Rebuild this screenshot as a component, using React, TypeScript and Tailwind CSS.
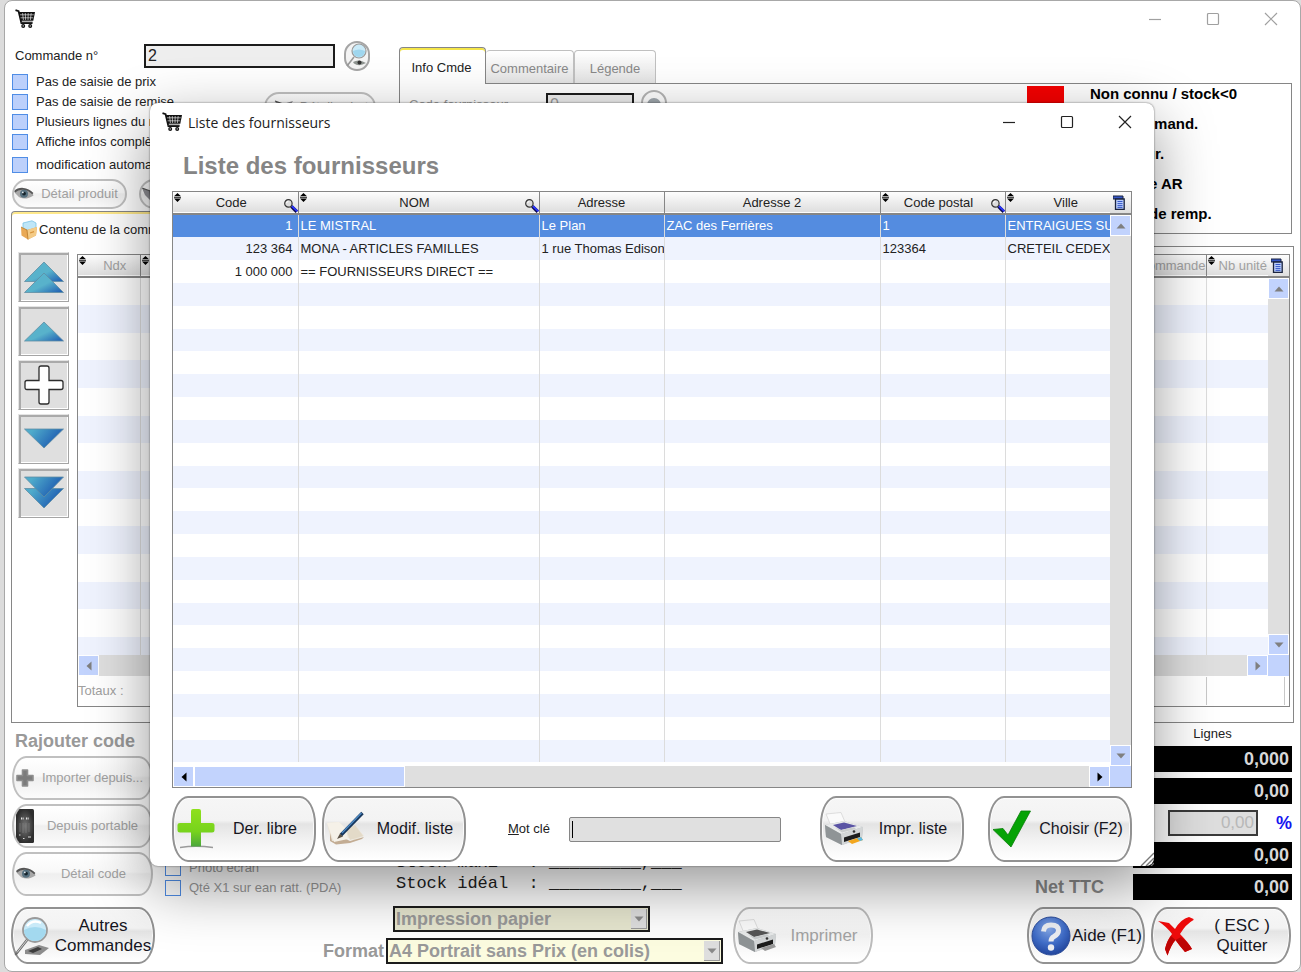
import React from "react";

/* ---------- icons ---------- */

function CartIcon() {
  return (
    <svg width="20" height="20" viewBox="0 0 20 20" aria-hidden="true">
      <path d="M0.5 1.2 L3.6 2.2 L6.4 14 H17.5" fill="none" stroke="#111" strokeWidth="1.8" />
      <path d="M4 3 H20 L18.3 11.8 H5.8 Z" fill="#111" />
      <path d="M5 5.8 H18.8 M5.6 8.8 H18.2 M7.6 4 L8.4 11 M10.3 4 L10.6 11 M13.2 4 L13 11 M16.2 4 L15.4 11" stroke="#fff" strokeWidth="0.6" />
      <path d="M6.2 13 H17.6" stroke="#555" strokeWidth="0.9" />
      <circle cx="8.2" cy="16.9" r="2" fill="#111" />
      <circle cx="15.2" cy="16.9" r="2" fill="#111" />
      <circle cx="8.2" cy="16.9" r="0.6" fill="#fff" />
      <circle cx="15.2" cy="16.9" r="0.6" fill="#fff" />
    </svg>
  );
}

function SortIcon() {
  return (
    <svg className="absolute left-px top-px" width="7" height="9" viewBox="0 0 7 9" aria-hidden="true">
      <path d="M3.5 0 L7 3.2 H0 Z M0 5.6 H7 L3.5 9 Z" fill="#000" />
      <path d="M0 4.4 H7" stroke="#000" strokeWidth="0.8" />
    </svg>
  );
}

function HeaderSearchIcon() {
  return (
    <svg className="absolute right-0 bottom-0" width="15" height="15" viewBox="0 0 15 15" aria-hidden="true">
      <path d="M8.4 8.4 L13.8 13.8" stroke="#0a0a50" strokeWidth="3.4" />
      <path d="M8.8 8 L14.4 13.4" stroke="#2a35ff" strokeWidth="1.8" />
      <circle cx="5.4" cy="5.4" r="3.7" fill="#dcdcdc" stroke="#333" strokeWidth="1.2" />
      <path d="M3.5 5.2 A2 2 0 0 1 5.4 3.4" stroke="#fff" strokeWidth="1" fill="none" />
    </svg>
  );
}

function ColumnsIcon() {
  return (
    <svg width="12" height="15" viewBox="0 0 12 15" aria-hidden="true">
      <path d="M0 1 H10 V4 H0 Z" fill="#3657c8" stroke="#1b2440" strokeWidth="1" />
      <path d="M2.5 4 H11.2 V14.3 H2.5 Z" fill="#b9cdfb" stroke="#1b2440" strokeWidth="1.3" />
      <path d="M4.5 6.5 H9.5 M4.5 8.6 H9.5 M4.5 10.6 H9.5 M4.5 12.4 H9.5" stroke="#3657c8" strokeWidth="1" />
    </svg>
  );
}

function EyeIcon() {
  return (
    <svg width="20" height="14" viewBox="0 0 20 14" aria-hidden="true">
      <path d="M0.5 5.5 C4 0.8 11 -0.6 18.5 6 L19.5 8.5 C14 12.6 6 12.8 3 8 Z" fill="#a8a8a8" />
      <path d="M0.5 4.8 C5 0.4 13 0.6 18.8 6.6" stroke="#555" strokeWidth="1.8" fill="none" />
      <circle cx="10" cy="6.8" r="4" fill="#56707f" />
      <circle cx="10" cy="6.6" r="1.9" fill="#16242c" />
      <circle cx="8.8" cy="5.4" r="0.9" fill="#dfe9ee" />
    </svg>
  );
}

function PenNibIcon() {
  return (
    <svg width="20" height="20" viewBox="0 0 20 20" aria-hidden="true">
      <path d="M1 4 L9 7 L19 4 L15 10 L10 17 L4 11 Z" fill="#8d8d92" />
      <path d="M1 4 L9 7 L10 17" stroke="#555" strokeWidth="1.2" fill="none" />
    </svg>
  );
}

function LensIcon({ size }: { size: number }) {
  return (
    <svg width={size} height={size} viewBox="0 0 40 40" aria-hidden="true">
      <path d="M12 34 L26 29 L36 32 L27 39 L12 38 Z" fill="#8d8d8d" />
      <path d="M15 35 L25 31 L29 33 L20 37 Z" fill="#3d3d3d" />
      <path d="M14 24 L3 38" stroke="#6e6e6e" strokeWidth="2.6" strokeLinecap="round" />
      <path d="M14 24 L4 36.5" stroke="#d4d4d4" strokeWidth="1" />
      <circle cx="22" cy="14" r="12" fill="#c9eaf8" stroke="#9a9a9a" strokeWidth="1.8" />
      <path d="M11 14 Q22 8 33 14 A11 11 0 0 1 11 14" fill="#a3d9ef" />
      <path d="M14 10 Q20 3 28 7" stroke="#fff" strokeWidth="2.4" fill="none" />
    </svg>
  );
}

function LensEyeIcon() {
  return (
    <svg width="22" height="26" viewBox="0 0 22 26" aria-hidden="true">
      <path d="M8 14 L1 23" stroke="#9a9a9a" strokeWidth="1.6" />
      <circle cx="13" cy="8" r="7" fill="#c9eaf8" stroke="#9a9a9a" strokeWidth="1.2" />
      <path d="M7 8 Q13 5 19 8 A6 6 0 0 1 7 8" fill="#9fd6ee" />
      <path d="M7 19 Q13 15.500 20 20 Q13 24 8 20.500" fill="#8e9490" />
      <circle cx="13.500" cy="19.500" r="2" fill="#333" />
    </svg>
  );
}

function SmallPlusIcon() {
  return (
    <svg width="18" height="18" viewBox="0 0 18 18" aria-hidden="true">
      <path d="M6.5 1 H11.5 V6.5 H17 V11.5 H11.5 V17 H6.5 V11.5 H1 V6.5 H6.5 Z" fill="#7c7c7c" stroke="#8f8f8f" strokeWidth="1.6" strokeLinejoin="round" />
    </svg>
  );
}

function PhoneIcon() {
  return (
    <svg width="18" height="34" viewBox="0 0 18 34" aria-hidden="true">
      <defs>
        <radialGradient id="phone">
          <stop offset="0" stopColor="#777" />
          <stop offset="1" stopColor="#2e2e2e" />
        </radialGradient>
      </defs>
      <rect width="18" height="34" rx="1.5" fill="url(#phone)" />
      <path d="M5 9.5 H8 M10 9.5 H13" stroke="#e5e5e5" strokeWidth="2" strokeDasharray="1 0.6" />
      <path d="M3 26 H4.5 M7 29.5 H8.5 M12 28 H15" stroke="#ddd" strokeWidth="1.2" />
      <path d="M4 14 V23 M7 14 V24 M10 14 V24 M13 14 V23" stroke="#888" strokeWidth="0.6" />
    </svg>
  );
}

function BoxIcon() {
  return (
    <svg width="18" height="20" viewBox="0 0 18 20" aria-hidden="true">
      <path d="M3 3 L12 0.8 L16 3 V10 H3 Z" fill="#bfe6f7" stroke="#7cc3e4" strokeWidth="0.8" />
      <path d="M1 7 L7 10 L17 7 L16 15.5 L8 19.5 L1.5 15.5 Z" fill="#e9a955" />
      <path d="M7 10 L17 7 L16 15.5 L8 19.5 Z" fill="#f4cb86" />
      <path d="M1 7 L7 10 L8 19.5" stroke="#b87828" strokeWidth="0.8" fill="none" />
      <path d="M10 13 L14 11.6" stroke="#d8943c" strokeWidth="1.2" />
    </svg>
  );
}

function GreenPlusIcon() {
  return (
    <svg width="40" height="42" viewBox="0 0 40 42" aria-hidden="true">
      <defs>
        <linearGradient id="green" x1="0" y1="0" x2="0" y2="1">
          <stop offset="0" stopColor="#8fe01c" />
          <stop offset="0.6" stopColor="#77d31c" />
          <stop offset="1" stopColor="#4ba63c" />
        </linearGradient>
      </defs>
      <path d="M4 39.5 Q20 37 37 39.5" stroke="#9a9a9a" strokeWidth="1.6" fill="none" />
      <path d="M17 1 H23 Q25 1 25 3 V15 H36 Q38.5 15 38.5 17 V22 Q38.5 24.5 36 24.5 H25 V38.5 H15 V24.5 H4 Q1.5 24.5 1.5 22 V17 Q1.5 15 4 15 H15 V3 Q15 1 17 1 Z" fill="url(#green)" />
    </svg>
  );
}

function PenBookIcon() {
  return (
    <svg width="40" height="36" viewBox="0 0 40 36" aria-hidden="true">
      <path d="M1 12 L13 11 L20 18 L29 14 L38 25 L28 29 L23 27 L9 32 L5 29 Z" fill="#ece5d8" />
      <path d="M4 22 L6 30 L20 28 L24 30 L38 26 L36 28 L24 32 L10 33.5 L4 30 Z" fill="#c3ad94" />
      <path d="M1 12 L13 11 L20 18 L22 28 L8 31 Z" fill="#f5f1e8" />
      <path d="M20 18 L29 14 L37 25 L24 29 Z" fill="#e3dac8" />
      <path d="M15 24 L36.5 2" stroke="#17365c" strokeWidth="3.4" />
      <path d="M16 22 L35.5 2" stroke="#4f8cc6" strokeWidth="1.3" />
      <path d="M11 28 L14 22.500 L17 25.500 Z" fill="#5a5145" />
    </svg>
  );
}

function PrinterIcon({ color }: { color: boolean }) {
  return (
    <svg width="40" height="34" viewBox="0 0 40 34" aria-hidden="true">
      <path d="M2 2 L17 0.5 L21 10 L7 14 Z" fill="#fafafa" stroke="#d5d5d5" strokeWidth="0.8" />
      <path d="M1 13 L20 9 L39 15 L38 26 L18 33 L2 25 Z" fill="#b9bcbe" />
      <path d="M1 13 L20 9 L39 15 L17 22 Z" fill="#e8eaea" />
      <path d="M9 13 L20 10.5 L33 14 L17 18 Z" fill={color ? "#5a54a4" : "#555"} />
      <path d="M11 15.5 L17 18 L30 15.3 L32 17 L18 20.5 Z" fill="#c9cccd" />
      <path d="M17 22 L39 15 L38 26 L18 33 Z" fill="#d3d6d7" />
      <path d="M1 13 L17 22 L18 33 L2 25 Z" fill="#8f9496" />
      <path d="M20 25.5 L36 20.5 V25 L20 30 Z" fill="#1d1d1d" />
      <path d="M24 29 L37 25 L39 28 L28 32 Z" fill={color ? "#f3a71e" : "#999"} />
      {color && <path d="M33 26.5 L37 25 L39 28 L36 29 Z" fill="#59b8e6" />}
      <circle cx="30" cy="19.5" r="1.3" fill="#333" />
    </svg>
  );
}

function CheckIcon() {
  return (
    <svg width="40" height="38" viewBox="0 0 40 38" aria-hidden="true">
      <path d="M1 19.5 L11 18.5 L16 25 L29 1 H38.5 L19 37 Z" fill="#06a306" stroke="#0a7d0a" strokeWidth="0.8" />
    </svg>
  );
}

function RedCrossIcon() {
  return (
    <svg width="38" height="40" viewBox="0 0 38 40" aria-hidden="true">
      <path d="M1 5 L12 7 L18 13 Q24 3 32 1 L36.5 3 L36.5 4 Q29 8 23 18 Q31 26 35 33 L28 36 Q22 29 18.5 24 Q14 29 10.5 39.5 L8 33 Q10 24 15 18 Q10 11 1 5 Z" fill="#ee0b0b" />
      <path d="M18.5 24 Q14 29 10.5 39.5 L8 33 Q10 25 14 20 Z M24 21 Q31 26 35 33 L28 36 Q22 29 18.5 24 Z" fill="#bd0505" />
    </svg>
  );
}

function HelpIcon() {
  return (
    <svg width="40" height="40" viewBox="0 0 40 40" aria-hidden="true">
      <defs>
        <radialGradient id="help" cx="0.45" cy="0.3" r="0.75">
          <stop offset="0" stopColor="#86a8e6" />
          <stop offset="0.55" stopColor="#3f6cc7" />
          <stop offset="1" stopColor="#1d3f95" />
        </radialGradient>
      </defs>
      <circle cx="20" cy="20" r="19" fill="url(#help)" stroke="#2a4a98" />
      <path d="M12.5 15.5 Q13 9 20 9 Q27.5 9 27.5 14.5 Q27.5 18 23 20.5 Q20 22 20 25.5" stroke="#eceef2" strokeWidth="5" fill="none" />
      <circle cx="20" cy="31.5" r="3.2" fill="#eceef2" />
    </svg>
  );
}

type Move = "first" | "previous" | "add" | "next" | "last";

function MoveIcon({ kind }: { kind: Move }) {
  return (
    <svg width="40" height="40" viewBox="0 0 40 40" aria-hidden="true">
      <defs>
        <linearGradient id="rise" x1="0" y1="0" x2="1" y2="1">
          <stop offset="0.55" stopColor="#58b2cb" />
          <stop offset="1" stopColor="#1c58b0" />
        </linearGradient>
        <linearGradient id="fall" x1="0" y1="0" x2="1" y2="0.4">
          <stop offset="0.2" stopColor="#4fabcb" />
          <stop offset="1" stopColor="#1c58b0" />
        </linearGradient>
      </defs>
      <g fill="url(#rise)" stroke="#5f8ea3" strokeWidth="0.8">
        {kind === "first" && (
          <>
            <path d="M20 5 L39.5 24.5 H0.5 Z" />
            <path d="M20 16 L39.5 35.5 H0.5 Z" />
          </>
        )}
        {kind === "previous" && <path d="M20 11 L39.5 30 H0.5 Z" />}
      </g>
      <g fill="url(#fall)" stroke="#5f8ea3" strokeWidth="0.8">
        {kind === "next" && <path d="M20 29 L0.5 10 H39.5 Z" />}
        {kind === "last" && (
          <>
            <path d="M20 35 L0.5 15.5 H39.5 Z" />
            <path d="M20 24 L0.5 4 H39.5 Z" />
          </>
        )}
      </g>
      {kind === "add" && (
        <path d="M17 1 H23 Q25 1 25 3 V15.5 H37 Q39 15.5 39 17.5 V22.5 Q39 24.5 37 24.5 H25 V37 Q25 39 23 39 H17 Q15 39 15 37 V24.5 H3 Q1 24.5 1 22.5 V17.5 Q1 15.5 3 15.5 H15 V3 Q15 1 17 1 Z" fill="#fff" stroke="#2c2c2c" strokeWidth="1.3" />
      )}
    </svg>
  );
}

/* ---------- controls ---------- */

function WindowControls({ className }: { className: string }) {
  const button = "flex w-[58px] items-center justify-center";
  return (
    <div className={`flex self-stretch ${className}`}>
      <button type="button" aria-label="Réduire" className={button}>
        <svg width="14" height="14" viewBox="0 0 14 14"><path d="M1 7.5 H13" stroke="currentColor" strokeWidth="1.2" /></svg>
      </button>
      <button type="button" aria-label="Agrandir" className={button}>
        <svg width="14" height="14" viewBox="0 0 14 14"><rect x="1.5" y="1.5" width="11" height="11" rx="1" fill="none" stroke="currentColor" strokeWidth="1.2" /></svg>
      </button>
      <button type="button" aria-label="Fermer" className={button}>
        <svg width="14" height="14" viewBox="0 0 14 14"><path d="M1 1 L13 13 M13 1 L1 13" stroke="currentColor" strokeWidth="1.2" /></svg>
      </button>
    </div>
  );
}

function GlossButton({ icon, children, className, disabled }: { icon: React.ReactNode; children: React.ReactNode; className: string; disabled?: boolean }) {
  return (
    <button
      type="button"
      disabled={disabled}
      className={`flex items-center rounded-[16px/28px] border-2 shadow-[inset_0_0_0_1px_rgba(255,255,255,0.8)] ${
        disabled
          ? "border-[#bdbdbd] bg-[linear-gradient(180deg,rgba(255,255,255,0.3),rgba(225,225,225,0.4)_48%,rgba(255,255,255,0.5))] text-[#a3a3a3]"
          : "border-[#929292] bg-[linear-gradient(180deg,#f6f6f6_0%,#f3f3f3_36%,#e4e4e4_42%,#f3f3f3_70%,#fff_100%)] text-[#16161f]"
      } ${className}`}
    >
      <span className="shrink-0">{icon}</span>
      <span className="flex-1 text-center whitespace-nowrap">{children}</span>
    </button>
  );
}

function Pill({ icon, children, className }: { icon: React.ReactNode; children: React.ReactNode; className: string }) {
  return (
    <button
      type="button"
      disabled
      className={`flex items-center overflow-hidden border-2 border-[#c0c0c0] bg-[linear-gradient(180deg,rgba(255,255,255,0.7)_0%,rgba(245,245,245,0.7)_45%,rgba(232,232,232,0.7)_50%,rgba(250,250,250,0.7)_100%)] text-[#a0a0a0] ${className}`}
    >
      <span className="shrink-0">{icon}</span>
      <span className="flex-1 text-center whitespace-nowrap">{children}</span>
    </button>
  );
}

function CheckRow({ label, className, filled }: { label: string; className?: string; filled?: boolean }) {
  return (
    <label className={`flex h-5 items-center gap-2 whitespace-nowrap ${className ?? ""}`}>
      <input type="checkbox" className={`size-4 shrink-0 appearance-none border border-[#4f8de6] ${filled ? "bg-[#bcd0fb]" : "bg-transparent"}`} />
      {label}
    </label>
  );
}

function ScrollButton({ dir, label, dim }: { dir: "up" | "down" | "left" | "right"; label: string; dim?: boolean }) {
  const paths = {
    up: "M5 2.5 L9.5 7.5 H0.5 Z",
    down: "M5 7.5 L0.5 2.5 H9.5 Z",
    left: "M2.5 5 L7.5 0.5 V9.5 Z",
    right: "M7.5 5 L2.5 0.5 V9.5 Z",
  };
  return (
    <button type="button" aria-label={label} className="flex size-[21px] shrink-0 items-center justify-center border border-white bg-[#c2d3fd]">
      <svg width="10" height="10" viewBox="0 0 10 10">
        <path d={paths[dir]} fill={dim ? "#7f7f7f" : "#000"} />
      </svg>
    </button>
  );
}

function Picker({ label, name, value, className, shade }: { label?: string; name: string; value: string; className: string; shade: string }) {
  const id = React.useId();
  return (
    <div className="flex items-center justify-end">
      {label && <label htmlFor={id} className="mr-0.5">{label}</label>}
      <div className={`relative ${className}`}>
        <select id={id} aria-label={name} disabled defaultValue={value} className={`block h-[26px] w-full appearance-none border-2 border-[#1c1c1c] pl-px text-[18px] leading-[20px] font-bold text-[#999] opacity-100 ${shade}`}>
          <option>{value}</option>
        </select>
        <span className="pointer-events-none absolute top-[3px] right-[3px] flex h-5 w-4 items-center justify-center border-r border-b border-[#999] bg-[#dedede]">
          <svg width="10" height="6" viewBox="0 0 10 6"><path d="M0.5 0.5 H9.5 L5 5.5 Z" fill="#8a8a8a" /></svg>
        </span>
      </div>
    </div>
  );
}

/* ---------- supplier list ---------- */

const columns = [
  { title: "Code", sort: true, search: true, width: "w-[125px]" },
  { title: "NOM", sort: true, search: true, width: "w-[241px]" },
  { title: "Adresse", sort: false, search: false, width: "w-[125px]" },
  { title: "Adresse 2", sort: false, search: false, width: "" },
  { title: "Code postal", sort: true, search: true, width: "w-[125px]" },
  { title: "Ville", sort: true, search: false, width: "w-[105px]" },
];

const suppliers = [
  ["1", "LE MISTRAL", "Le Plan", "ZAC des Ferrières", "1", "ENTRAIGUES SUR"],
  ["123 364", "MONA - ARTICLES FAMILLES", "1 rue Thomas Edison", "", "123364", "CRETEIL CEDEX"],
  ["1 000 000", "== FOURNISSEURS DIRECT ==", "", "", "", ""],
];

const supplierRows = Array.from({ length: 24 }, (_, i) => suppliers[i] ?? ["", "", "", "", "", ""]);

const headFill = "bg-[linear-gradient(180deg,#fdfdfd,#dedede)]";

function SupplierTable() {
  return (
    <div className="border border-[#868686] bg-white">
      <div className="flex">
        <div className="min-w-0 flex-1 pb-1">
          <table className="w-full table-fixed border-collapse">
            <colgroup>
              {columns.map((c) => (
                <col key={c.title} className={c.width} />
              ))}
            </colgroup>
            <thead>
              <tr className={`h-[22px] border-b-2 border-[#868686] ${headFill}`}>
                {columns.map((c, i) => (
                  <th key={c.title} scope="col" className={`relative p-0 text-center font-normal ${i < 5 ? "border-r border-[#868686]" : "pl-4"} ${c.search ? "pr-2" : ""}`}>
                    {c.sort && <SortIcon />}
                    {c.title}
                    {c.search && <HeaderSearchIcon />}
                  </th>
                ))}
              </tr>
            </thead>
            <tbody>
              {supplierRows.map((row, r) => (
                <tr key={r} className={`${r % 6 === 5 ? "h-[22px]" : "h-[23px]"} ${r === 0 ? "bg-[#548ce0] text-white" : r % 2 ? "bg-[#eff3fe]" : "bg-white"}`}>
                  {row.map((cell, c) => (
                    <td key={c} className={`overflow-hidden p-0 leading-[22px] whitespace-nowrap ${c === 0 ? "pr-[5px] text-right" : "pl-0.5"} ${c < 5 ? "border-r border-[#dcdcdc]" : ""}`}>
                      {cell}
                    </td>
                  ))}
                </tr>
              ))}
            </tbody>
          </table>
        </div>
        <div className="flex w-[21px] flex-col bg-[#dfdfdf]">
          <button type="button" aria-label="Colonnes" className={`h-[23px] border-b-2 border-[#868686] pl-[3px] ${headFill}`}>
            <ColumnsIcon />
          </button>
          <ScrollButton dir="up" label="Défiler vers le haut" dim />
          <div className="flex-1" />
          <ScrollButton dir="down" label="Défiler vers le bas" dim />
        </div>
      </div>
      <div className="flex h-[21px] bg-[#dfdfdf]">
        <ScrollButton dir="left" label="Défiler à gauche" />
        <div className="w-[211px] border border-white bg-[#c2d3fd]" />
        <div className="flex-1" />
        <ScrollButton dir="right" label="Défiler à droite" />
        <div className="w-[21px] bg-[#c2d3fd]" />
      </div>
    </div>
  );
}

function SupplierDialog() {
  return (
    <section
      role="dialog"
      aria-labelledby="dialog-heading"
      className="absolute top-[103px] right-[147px] left-[150px] z-20 rounded-lg bg-white px-[22px] pb-1 shadow-[0_20px_60px_rgba(0,0,0,0.42),0_0_2px_rgba(0,0,0,0.6)]"
    >
      <header className="-mr-[22px] -ml-2.5 flex h-[38px] items-center gap-1.5">
        <CartIcon />
        <span className="font-['Open_Sans',sans-serif] text-[14px]">Liste des fournisseurs</span>
        <WindowControls className="ml-auto text-[#222]" />
      </header>
      <h1 id="dialog-heading" className="pl-[11px] text-[24px] leading-[50px] font-bold text-[#858585]">Liste des fournisseurs</h1>
      <SupplierTable />
      <footer className="flex items-center pt-2">
        <GlossButton icon={<GreenPlusIcon />} className="h-[66px] w-[144px] pl-0.5 text-[16px]">Der. libre</GlossButton>
        <GlossButton icon={<PenBookIcon />} className="ml-1.5 h-[66px] w-[144px] pl-0.5 text-[16px]">Modif. liste</GlossButton>
        <label htmlFor="keyword" className="ml-[42px] w-[61px]"><u>M</u>ot clé</label>
        <div className="flex h-[25px] w-[212px] items-center rounded-xs border border-[#868686] bg-[#e0e0e0] pl-0.5">
          <span className="h-[17px] w-px bg-black" />
          <input id="keyword" className="h-full min-w-0 flex-1 bg-transparent outline-none" />
        </div>
        <GlossButton icon={<PrinterIcon color />} className="ml-auto h-[66px] w-[144px] pl-0.5 text-[16px]">Impr. liste</GlossButton>
        <GlossButton icon={<CheckIcon />} className="ml-6 h-[66px] w-[144px] pl-0.5 text-[16px]">Choisir (F2)</GlossButton>
      </footer>
      <svg className="absolute right-0 bottom-0" width="14" height="14" viewBox="0 0 14 14" aria-hidden="true">
        <path d="M1 14 L14 1 M6 14 L14 6 M11 14 L14 11" stroke="#777" strokeWidth="1.4" />
      </svg>
    </section>
  );
}

/* ---------- order window ---------- */

const options = ["Pas de saisie de prix", "Pas de saisie de remise", "Plusieurs lignes du même", "Affiche infos complètes"];
const legend = ["Non connu / stock<0", "Non command.", "Code four.", "Demande AR", "Articles de remp."];
const moves: { kind: Move; label: string }[] = [
  { kind: "first", label: "Début" },
  { kind: "previous", label: "Précédent" },
  { kind: "add", label: "Ajouter" },
  { kind: "next", label: "Suivant" },
  { kind: "last", label: "Fin" },
];

function OrderHeader() {
  return (
    <div className="flex">
      <div className="flex w-[388px] shrink-0 flex-col pt-1">
        <div className="flex h-[31px] items-center pl-1">
          <label htmlFor="order" className="w-[129px]">Commande n°</label>
          <input id="order" defaultValue="2" className="h-6 w-[191px] border-2 border-[#1c1c1c] bg-[#eee] pl-0.5 text-[16px]" />
          <button type="button" aria-label="Rechercher" className="ml-[9px] flex h-[30px] w-[26px] items-center justify-center rounded-full border-2 border-[#a5a5a5] bg-[#f4f4f4]">
            <LensEyeIcon />
          </button>
        </div>
        <div className="mt-px flex items-start pl-px">
          <div>
            {options.map((o) => (
              <CheckRow key={o} label={o} filled />
            ))}
            <CheckRow label="modification automatique" filled className="mt-[3px]" />
          </div>
          <Pill icon={<PenNibIcon />} className="mt-5 mr-[23px] ml-auto h-[30px] w-[112px] rounded-full pl-2">Détail achat</Pill>
        </div>
        <div className="mt-1 flex gap-3 pl-px">
          <Pill icon={<EyeIcon />} className="h-[30px] w-[115px] rounded-full">Détail produit</Pill>
          <Pill icon={<PenNibIcon />} className="h-[30px] w-[115px] rounded-full">Stock</Pill>
        </div>
        <button type="button" role="tab" aria-selected="true" className="z-10 mt-0.5 -mb-px flex h-9 w-[180px] items-center rounded-t border border-b-0 border-[#868686] bg-white pl-2 shadow-[inset_0_2px_0_#ffe98a]">
          <BoxIcon />
          <span className="pl-px whitespace-nowrap">Contenu de la commande</span>
        </button>
      </div>
      <div className="flex flex-1 flex-col pt-[11px] pr-0.5">
        <div role="tablist" className="flex items-end">
          <button type="button" role="tab" aria-selected="true" className="z-10 -mb-px h-[37px] w-[87px] rounded-t border border-b-0 border-[#868686] bg-white pr-0.5 pt-1 shadow-[inset_0_2px_0_#f5e64a]">Info Cmde</button>
          <button type="button" role="tab" aria-selected="false" className="h-[33px] w-[88px] rounded-t border border-b-0 border-l-0 border-[#c0c0c0] bg-[linear-gradient(180deg,#fff,#e4e4e4)] pt-1 text-[#888]">Commentaire</button>
          <button type="button" role="tab" aria-selected="false" className="h-[33px] w-[82px] rounded-t border border-b-0 border-[#c0c0c0] bg-[linear-gradient(180deg,#fff,#e4e4e4)] pt-1 text-[#888]">Légende</button>
        </div>
        <div className="flex h-[151px] items-start border border-[#868686]">
          <div className="flex items-center pt-[6px] pl-[9px] text-[#999]">
            <label htmlFor="supplier" className="w-[137px]">Code fournisseur</label>
            <input id="supplier" defaultValue="0" readOnly className="h-6 w-[88px] border-2 border-[#1c1c1c] bg-[#eee] pl-0.5 text-[16px]" />
            <button type="button" aria-label="Choisir un fournisseur" className="ml-[7px] flex h-[30px] w-[26px] items-center justify-center rounded-full border-2 border-[#b5b5b5]">
              <span className="size-3.5 rounded-full bg-[#a0a8ae]" />
            </button>
          </div>
          <div className="mr-[54px] ml-auto flex gap-[26px] text-[15px] font-bold text-black">
            <span className="mt-0.5 h-[26px] w-[37px] bg-[#f50000]" />
            <ul>
              {legend.map((l) => (
                <li key={l} className="h-[30px] leading-[19px] whitespace-nowrap">{l}</li>
              ))}
            </ul>
          </div>
        </div>
      </div>
    </div>
  );
}

function OrderLines() {
  const heads = ["Ndx", "Code", "Désignation", "Qté commande", "Nb unité"];
  return (
    <div className="min-w-0 flex-1 border border-[#868686] bg-white text-[#a0a0a0]">
      <div className="flex h-[400px] overflow-hidden">
        <div className="min-w-0 flex-1 overflow-hidden">
          <table className="w-full table-fixed border-collapse">
            <colgroup>
              <col className="w-[62px]" />
              <col className="w-[120px]" />
              <col />
              <col className="w-[110px]" />
              <col className="w-[62px]" />
            </colgroup>
            <thead>
              <tr className={`h-[22px] border-b-2 border-[#868686] ${headFill}`}>
                {heads.map((h, i) => (
                  <th key={h} scope="col" className={`relative p-0 font-normal whitespace-nowrap ${i < 4 ? "border-r border-[#868686]" : "pl-3 text-left"} ${i === 3 ? "text-right" : ""} ${i === 0 ? "pl-3" : ""}`}>
                    <SortIcon />
                    {h}
                  </th>
                ))}
              </tr>
            </thead>
            <tbody>
              {Array.from({ length: 14 }, (_, r) => (
                <tr key={r} className={`${r % 3 === 2 ? "h-[27px]" : "h-7"} ${r % 2 ? "bg-[#eff3fe]" : "bg-white"}`}>
                  {heads.map((h, i) => (
                    <td key={h} className={`p-0 ${i < 4 ? "border-r border-[#dcdcdc]" : ""}`} />
                  ))}
                </tr>
              ))}
            </tbody>
          </table>
        </div>
        <div className="flex w-[21px] flex-col bg-[#dfdfdf]">
          <button type="button" aria-label="Colonnes" className={`h-[23px] border-b-2 border-[#868686] pl-[3px] ${headFill}`}>
            <ColumnsIcon />
          </button>
          <ScrollButton dir="up" label="Monter" dim />
          <div className="flex-1" />
          <ScrollButton dir="down" label="Descendre" dim />
        </div>
      </div>
      <div className="flex h-[21px] bg-[#dfdfdf]">
        <ScrollButton dir="left" label="Gauche" dim />
        <div className="flex-1" />
        <ScrollButton dir="right" label="Droite" dim />
        <div className="w-[21px] bg-[#c2d3fd]" />
      </div>
      <div className="flex h-[30px] items-center">
        <span className="flex-1">Totaux :</span>
        <span className="mr-1 h-[28px] w-[79px] border-x border-[#c8c8c8]" />
      </div>
    </div>
  );
}

function Amount({ value }: { value: string }) {
  return <output className="block h-[26px] w-[159px] bg-black pr-[3px] text-right text-[18px] leading-[26px] font-bold text-[#d8d8d8]">{value}</output>;
}

function OrderWindow() {
  return (
    <main className="ml-1 min-h-screen rounded-lg border border-[#a8a8a8] bg-white px-1.5 pb-1.5">
      <header className="-mr-1.5 flex h-[35px] items-center pl-1">
        <CartIcon />
        <WindowControls className="ml-auto text-[#a0a0a0]" />
      </header>
      <OrderHeader />
      <div className="flex items-start gap-2 border border-[#868686] pt-[5px] pr-[3px] pb-[15px] pl-[6px]">
        <div className="flex flex-col gap-1">
          {moves.map((m) => (
            <button key={m.kind} type="button" aria-label={m.label} className="flex h-[50px] w-[51px] items-center justify-center border border-t-[#e4e4e4] border-r-[#a5a5a5] border-b-[#a5a5a5] border-l-[#e4e4e4] bg-[#dfdfdf] shadow-[inset_2px_2px_0_#aaa,inset_-1px_-1px_0_#fff]">
              <MoveIcon kind={m.kind} />
            </button>
          ))}
        </div>
        <div className="flex min-w-0 flex-1 pt-0.5"><OrderLines /></div>
      </div>

      <div className="flex">
        <div className="flex w-[142px] flex-col gap-1 pl-px">
          <h2 className="h-[29px] pl-[3px] text-[18px] leading-[36px] font-bold whitespace-nowrap text-[#999]">Rajouter code</h2>
          <Pill icon={<SmallPlusIcon />} className="h-11 w-[141px] rounded-[14px/22px] pl-0.5">Importer depuis...</Pill>
          <Pill icon={<PhoneIcon />} className="h-11 w-[141px] rounded-[14px/22px] pl-0.5">Depuis portable</Pill>
          <Pill icon={<EyeIcon />} className="h-11 w-[141px] rounded-[14px/22px] pl-0.5">Détail code</Pill>
        </div>
        <div className="flex flex-1 items-end pl-3">
          <div className="w-[231px] pb-0.5 text-[#999]">
            <CheckRow label="Photo écran" />
            <CheckRow label="Qté X1 sur ean ratt. (PDA)" />
          </div>
          <div className="pb-1.5 font-['Liberation_Mono',monospace] text-[17px] leading-[21px] whitespace-pre text-[#222]">
            <div>{"Stock maxi   : _________,___"}</div>
            <div>{"Stock idéal  : _________,___"}</div>
          </div>
        </div>
        <div className="flex flex-col items-end gap-1.5 pr-0.5">
          <span className="h-[17px] w-[159px] pt-px text-center leading-[20px]">Lignes</span>
          <Amount value="0,000" />
          <Amount value="0,00" />
          <div className="flex items-center gap-[18px]">
            <input aria-label="Remise" defaultValue="0,00" disabled className="h-[26px] w-[90px] border-2 border-[#3a3a3a] bg-[#dedede] pr-0.5 text-right text-[17px] text-[#b8b8b8]" />
            <span className="text-[18px] leading-[26px] font-bold text-[#1414f0]">%</span>
          </div>
          <Amount value="0,00" />
          <div className="flex items-center gap-[29px]">
            <span className="text-[18px] leading-[26px] font-bold text-[#8a8a8a]">Net TTC</span>
            <Amount value="0,00" />
          </div>
        </div>
      </div>

      <footer className="mt-1.5 flex items-end pr-[3px] text-[17px] leading-[20px]">
        <GlossButton icon={<LensIcon size={40} />} className="h-[57px] w-[144px]">
          Autres<br />Commandes
        </GlossButton>
        <div className="ml-[166px] flex w-[402px] flex-col gap-1.5 text-[18px] font-bold text-[#999]">
          <div className="pr-[73px]"><Picker name="Impression" value="Impression papier" className="w-[257px]" shade="bg-[#e6e6cf]" /></div>
          <Picker label="Format" name="Format" value="A4 Portrait sans Prix (en colis)" className="w-[337px]" shade="bg-[#fcfce0]" />
        </div>
        <GlossButton icon={<PrinterIcon color={false} />} disabled className="ml-2.5 h-[57px] w-[140px] pl-0.5">Imprimer</GlossButton>
        <GlossButton icon={<HelpIcon />} className="ml-auto h-[57px] w-[118px] pl-0.5">Aide (F1)</GlossButton>
        <GlossButton icon={<RedCrossIcon />} className="ml-1.5 h-[57px] w-[140px] pl-1">
          ( ESC )<br />Quitter
        </GlossButton>
      </footer>
    </main>
  );
}

export default function App() {
  return (
    <div className="relative min-h-screen overflow-hidden bg-[#dcdcdc] font-['Liberation_Sans',Arial,sans-serif] text-[13px] text-[#222]">
      <OrderWindow />
      <SupplierDialog />
    </div>
  );
}
